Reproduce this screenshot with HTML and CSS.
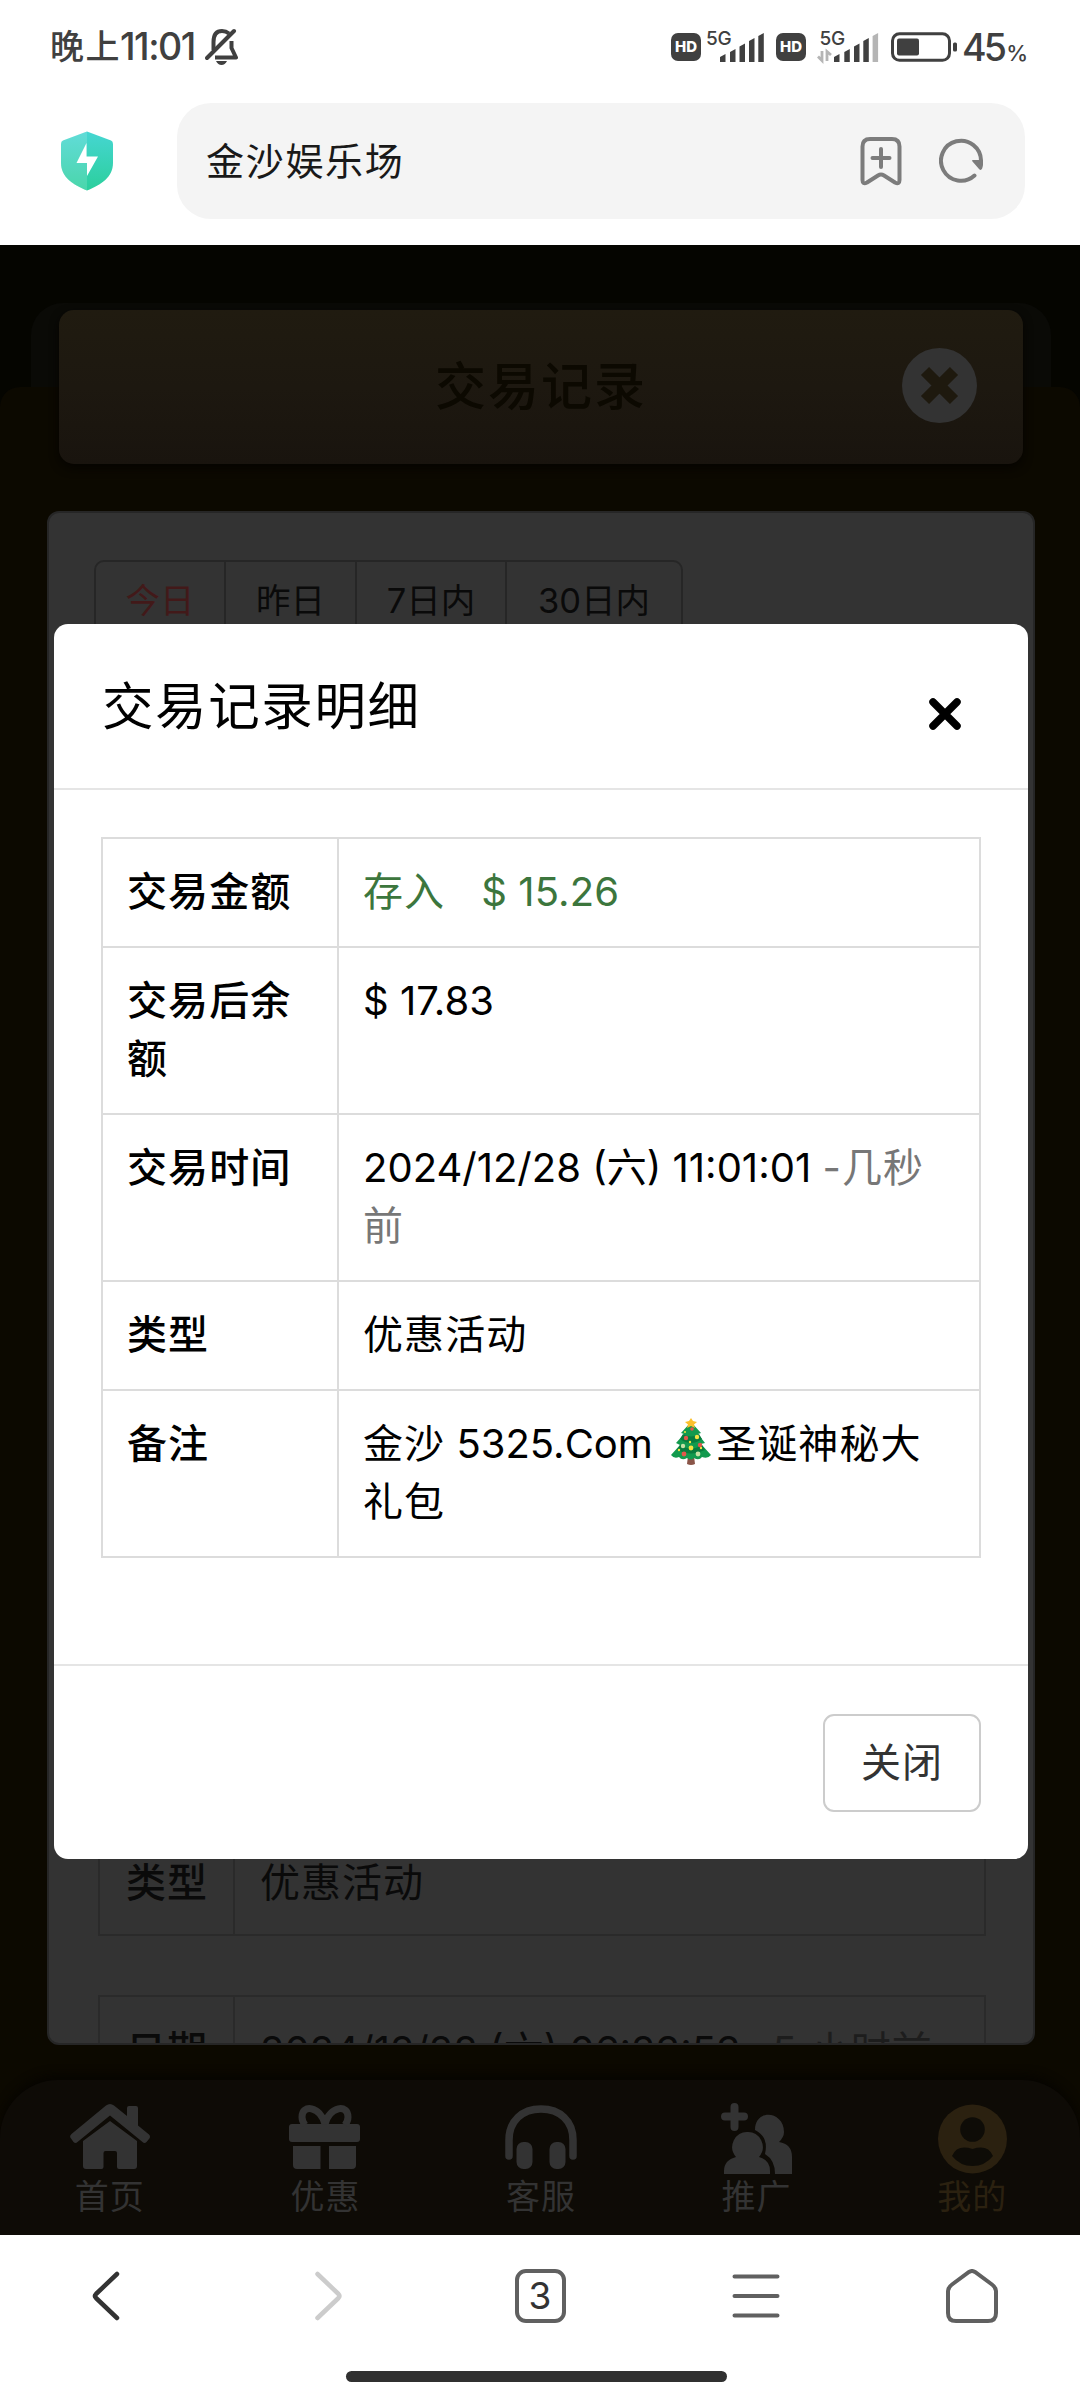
FILE: index.html
```html
<!DOCTYPE html>
<html lang="zh-CN">
<head>
<meta charset="utf-8">
<title>金沙娱乐场</title>
<link rel="stylesheet" href="styles.css">
</head>
<body>
<div class="screen">
  <header class="status">
    <div class="status-left">
      <span class="clock-cjk">晚上</span><span class="clock-num">11:01</span>
      <svg class="bell" width="33" height="38" viewBox="0 0 33 38" fill="none" stroke="#404040" stroke-width="4">
        <path d="M8.500 22V14Q8.500 3 17 3Q21 3 24 5.500M26.500 13V20L31 29.500H10" stroke-linejoin="round"/>
        <path d="M2 30L29 3" stroke-linecap="round"/>
        <path d="M11 33H22Q20 37 16.500 37Q13 37 11 33Z" fill="#404040" stroke="none"/>
      </svg>
    </div>
    <div class="status-right">
      <span class="hd">HD</span>
      <svg class="signal" width="60" height="34" viewBox="0 0 60 34">
        <text x="0" y="15" class="g5">5G</text>
        <g fill="#404040"><path d="M14 32V27L19.500 24V32ZM24 32V22L29.500 19V32ZM33.500 32V16.500L39 13.500V32ZM43 32V11L48.500 8V32ZM52.300 32V6L57.800 3V32Z"/></g>
      </svg>
      <span class="hd hd-two">HD</span>
      <svg class="signal signal-two" width="62" height="34" viewBox="0 0 62 34">
        <text x="2.500" y="15" class="g5">5G</text>
        <path d="M5 21V30.500L1 26.500M10 31V21.500L14 25" fill="none" stroke="#b5b5b5" stroke-width="2.800"/>
        <g fill="#404040"><path d="M17 32V27L22.500 24V32ZM27.300 32V22L32.800 19V32ZM37 32V16.500L42.500 13.500V32ZM46.300 32V11L51.800 8V32Z"/></g>
        <path d="M55.600 32V6L61.100 3V32Z" fill="#b5b5b5"/>
      </svg>
      <svg class="battery" width="67" height="30" viewBox="0 0 67 30">
        <rect x="1.500" y="1.800" width="57" height="26.500" rx="7" fill="none" stroke="#404040" stroke-width="3"/>
        <rect x="6" y="6.500" width="22" height="17" rx="2" fill="#404040"/>
        <rect x="62" y="10.500" width="4" height="9" rx="1.500" fill="#404040"/>
      </svg>
      <span class="percent">45<small>%</small></span>
    </div>
  </header>

  <div class="address">
    <svg class="shield" width="52" height="60" viewBox="0 0 52 60">
      <defs><linearGradient id="sh" x1="0" y1="0" x2="0" y2="1"><stop offset="0" stop-color="#46d6d2"/><stop offset="1" stop-color="#2bcf9c"/></linearGradient></defs>
      <path d="M26 0.500L50 9.500Q52 10.300 52 13V32C52 46 40 54 26 59.500C12 54 0 46 0 32V13Q0 10.300 2 9.500Z" fill="url(#sh)"/>
      <path d="M26 0.500L2 9.500Q0 10.300 0 13V32C0 46 12 54 26 59.500Z" fill="#fff" opacity=".15"/>
      <path d="M25.500 12V25.500H37L26 45V32H15.500Z" fill="#fff"/>
    </svg>
    <div class="field">
      <span class="field-text">金沙娱乐场</span>
      <svg width="42" height="50" viewBox="0 0 42 50" fill="none" stroke="#7c7c7c" stroke-width="4" stroke-linecap="round" stroke-linejoin="round">
        <path d="M10 3H32Q39.500 3 39.500 10.500V44Q39.500 49 35 46.500L24 39.500Q21 37.700 18 39.500L7 46.500Q2.500 49 2.500 44V10.500Q2.500 3 10 3Z"/>
        <path d="M21 13V31M12.500 22H29.500"/>
      </svg>
      <svg class="reload" width="44" height="46" viewBox="0 0 44 46">
        <path d="M35.500 37.500A20 20 0 1 1 42 23" fill="none" stroke="#7c7c7c" stroke-width="4" stroke-linecap="round"/>
        <path d="M33.500 23.500Q32 22 34 22H44V27Q43 34 40 31Z" fill="#7c7c7c"/>
      </svg>
    </div>
  </div>

  <main class="site">
    <div class="backplate"></div>
    <div class="sheet"></div>
    <div class="site-flow">
      <div class="titlebar">
        <h1>交易记录</h1>
        <svg class="round-close" width="75" height="75" viewBox="0 0 75 75"><circle cx="37.500" cy="37.500" r="37.500" fill="#333"/><path d="M23 23L52 52M52 23L23 52" stroke="#1e190e" stroke-width="11.500"/></svg>
      </div>
      <section class="panel">
        <div class="tabs"><span class="tab active">今日</span><span class="tab">昨日</span><span class="tab">7日内</span><span class="tab">30日内</span></div>
        <div class="records">
          <div class="record"><b>类型</b><span>优惠活动</span></div>
          <div class="record next"><b>日期</b><span><i class="rec-date">2024/12/28 (六) 06:23:53</i><em>-5 小时前</em></span></div>
        </div>
      </section>
      <nav class="nav">
        <a class="nav-item">
          <svg width="80" height="72" viewBox="0 0 80 72" fill="#333">
            <path d="M1 35.500Q-1 33 1.500 31L36 2.500Q40 -0.500 44 2.500L57 13V5Q57 3 59 3H66Q68 3 68 5V22.500L79 31.500Q81 33.500 79 36L76.500 39Q74.500 41 72.500 39L40 12.500L7.500 39Q5.500 41 3.500 39Z"/>
            <path d="M13 38L40 18L67 38V63Q67 66 64 66H49Q47 66 47 64V50Q47 48 45 48H35.500Q33.500 48 33.500 50V64Q33.500 66 31.500 66H16Q13 66 13 63Z"/>
          </svg><span>首页</span></a>
        <a class="nav-item">
          <svg width="72" height="72" viewBox="0 0 72 72" fill="#333">
            <rect x="0" y="21" width="71" height="18" rx="3"/><path d="M4 43H31.500V66H8Q4 66 4 62ZM40 43H67V62Q67 66 63 66H40Z"/>
            <path d="M36 21C31 3 13 1 13 14Q13 18 16 22M36 21C41 3 59 1 59 14Q59 18 56 22" fill="none" stroke="#333" stroke-width="7"/>
          </svg><span>优惠</span></a>
        <a class="nav-item">
          <svg width="72" height="72" viewBox="0 0 72 72" fill="#333">
            <path d="M4 53V37C4 18 17 6 36 6S68 18 68 37V53" fill="none" stroke="#333" stroke-width="7.500" stroke-linecap="round"/>
            <rect x="11.500" y="39" width="16" height="27" rx="7"/><rect x="44.500" y="39" width="16" height="27" rx="7"/>
          </svg><span>客服</span></a>
        <a class="nav-item">
          <svg width="72" height="72" viewBox="0 0 72 72" fill="#333">
            <path d="M13.500 4V24M4 13.500H23" stroke="#333" stroke-width="8" stroke-linecap="round"/>
            <path d="M34 27C34 5 63 8 63 29Q63 34 58 39Q71 41 71 54V71H54Q54 57 44 51Q48 34 34 27Z"/>
            <path d="M26.500 29A14.500 15 0 0 1 38 54Q49 57 49 68V71H3V68Q3 57 15 54A14.500 15 0 0 1 26.500 29Z"/>
          </svg><span>推广</span></a>
        <a class="nav-item current">
          <svg width="69" height="72" viewBox="0 0 69 72">
            <circle cx="34.500" cy="36" r="34.500" fill="#2b2110"/><circle cx="34.500" cy="26.500" r="12.300" fill="#0e0c07"/>
            <path d="M14 53Q19 41 34.500 46Q50 41 55 53Q47 63 34.500 63Q22 63 14 53Z" fill="#0e0c07"/>
          </svg><span>我的</span></a>
      </nav>
    </div>

    <div class="modal">
      <div class="modal-head"><h2>交易记录明细</h2>
        <svg width="34" height="34" viewBox="0 0 34 34"><path d="M5 5L29 29M29 5L5 29" stroke="#000" stroke-width="7.500" stroke-linecap="round"/></svg>
      </div>
      <div class="modal-body">
        <table class="detail">
          <tr><th>交易金额</th><td class="green">存入<span class="amount">$ 15.26</span></td></tr>
          <tr><th>交易后余额</th><td><span class="balance">$ 17.83</span></td></tr>
          <tr><th>交易时间</th><td><span class="date">2024/12/28 </span><span class="day">(六)</span><span class="time"> 11:01:01 </span><span class="ago">-几秒<br>前</span></td></tr>
          <tr><th>类型</th><td>优惠活动</td></tr>
          <tr><th>备注</th><td>金沙<span class="site-name"> 5325.Com </span><svg class="tree" role="img" aria-label="🎄" width="40" height="48" viewBox="0 0 40 48">
            <path d="M17 38H23L24 46Q20 48 16 46Z" fill="#8a5548"/>
            <path d="M20 4L30 15L27 16L34 25L30 26L40 37Q37 41 31 39Q28 43 23 40Q20 43 16 40Q11 43 8 39Q3 41 0 37L9 27L5 25L13 16L10 15Z" fill="#129a4e"/>
            <path d="M12 16Q20 21 28 16L31 21Q20 29 9 21ZM9 27Q20 34 31 27L34 32Q20 39 6 32Z" fill="#087c3e"/>
            <path d="M20 0L22 3L26 4L23 6.500L24 10L20 8L16 10L17 6.500L14 4L18 3Z" fill="#fbc02d"/>
            <g fill="#f5e342"><circle cx="26" cy="19" r="2.200"/><circle cx="20" cy="30" r="2.400"/><circle cx="14" cy="14" r="1"/><circle cx="30" cy="30" r="1.200"/><circle cx="8" cy="32" r="1.200"/><circle cx="19" cy="24" r="1.200"/></g>
            <g fill="#e2574c"><circle cx="15" cy="20" r="2.200"/><circle cx="21" cy="11" r="1.800"/><circle cx="29" cy="27" r="2.200"/><circle cx="13" cy="36" r="2.400"/></g>
            <g fill="#c5e1a5"><circle cx="12" cy="28" r="2.200"/><circle cx="27" cy="36" r="2.400"/></g>
          </svg>圣诞神秘大<br>礼包</td></tr>
        </table>
      </div>
      <div class="modal-foot"><button class="close-btn">关闭</button></div>
    </div>
  </main>

  <footer class="browser-bar">
    <div class="keys">
      <svg width="52" height="54" viewBox="0 0 52 54" fill="none" stroke="#333" stroke-width="4.500" stroke-linecap="round" stroke-linejoin="round"><path d="M35 5L14 25Q12 27 14 29L35 49"/></svg>
      <svg width="52" height="54" viewBox="0 0 52 54" fill="none" stroke="#ccc" stroke-width="4.500" stroke-linecap="round" stroke-linejoin="round"><path d="M19.500 5L40.500 25Q42.500 27 40.500 29L19.500 49"/></svg>
      <span class="count">3</span>
      <svg width="52" height="54" viewBox="0 0 52 54" stroke="#606060" stroke-width="4" stroke-linecap="round"><path d="M4.500 7.500H47.500M4.500 27H47.500M4.500 46.500H47.500"/></svg>
      <svg width="52" height="54" viewBox="0 0 52 54" fill="none" stroke="#606060" stroke-width="4"><path d="M23 3Q26 1 29 3L46 15.500Q50 18.500 50 22V44Q50 52 42 52H10Q2 52 2 44V22Q2 18.500 6 15.500Z"/></svg>
    </div>
    <div class="handle"></div>
  </footer>
</div>
</body>
</html>
```

FILE: styles.css
```css
* { box-sizing: border-box; }
body { margin: 0; background: #fff; font-family: Inter, "Noto Sans CJK SC", sans-serif; }
svg { display: block; flex: none; }
h1, h2 { margin: 0; font-weight: 400; }
.screen { width: 1080px; height: 2400px; display: flex; flex-direction: column; overflow: hidden; background: #fff; }

.status { height: 94px; padding: 0 55px 0 50px; display: flex; justify-content: space-between; align-items: center; color: #404040; }
.status-left, .status-right { display: flex; align-items: center; height: 38px; }
.clock-cjk { width: 70px; font-size: 34px; font-weight: 500; letter-spacing: 1.500px; line-height: 38px; white-space: nowrap; }
.clock-num { width: 82px; font-size: 37.500px; font-weight: 500; letter-spacing: -1.500px; line-height: 38px; white-space: nowrap; }
.bell { margin-left: 3px; }
.hd { width: 30px; height: 28px; margin-right: 5px; border-radius: 7px; background: #404040; color: #fff; font-size: 15px; font-weight: 800; line-height: 28px; text-align: center; }
.hd-two { margin: 0 11px 0 10px; }
.signal { overflow: visible; }
.g5 { font: 500 19px Inter, sans-serif; fill: #404040; letter-spacing: -.3px; }
.battery { margin-left: 12px; }
.percent { width: 63px; margin-left: 4px; font-size: 37.500px; font-weight: 500; letter-spacing: -2.800px; white-space: nowrap; }
.percent small { margin-left: 2px; font-size: 22px; }

.address { height: 151px; padding: 9px 55px 26px 61px; display: flex; justify-content: space-between; align-items: center; }
.field { width: 848px; height: 116px; padding: 0 42px 0 29px; display: flex; align-items: center; border-radius: 34px; background: #f4f4f4; }
.field-text { flex: 1; padding-bottom: 5px; color: #191919; font-size: 38px; letter-spacing: 1.700px; }
.reload { margin-left: 37px; }

.site { position: relative; height: 1990px; flex: none; overflow: hidden; background: #050500; }
.backplate { position: absolute; left: 31px; right: 29px; top: 58px; height: 200px; border-radius: 32px 32px 0 0; background: #0a0a06; }
.sheet { position: absolute; left: 0; right: 0; top: 142px; bottom: 0; border-radius: 20px 20px 0 0; background: #0c0900; }
.site-flow { position: relative; height: 100%; padding-top: 65px; display: flex; flex-direction: column; }
.titlebar { display: grid; grid-template-columns: 130px 1fr 130px; align-items: center; height: 154px; flex: none; margin: 0 57px 0 59px; border-radius: 15px; background: linear-gradient(#201b10, #1d1810 50%, #19140e); box-shadow: 0 4px 10px #060400; }
.titlebar h1 { grid-column: 2; color: #0c0901; font-size: 51px; font-weight: 500; letter-spacing: 2px; text-align: center; line-height: 70px; }
.round-close { justify-self: end; margin: 0 46px 4px 0; }
.panel { height: 1534px; flex: none; margin: 47px 45px 0 47px; padding: 47px 45px 0 45px; display: flex; flex-direction: column; justify-content: space-between; overflow: hidden; border: 2px solid #262626; border-radius: 12px; background: #333; }
.tabs { display: flex; align-self: flex-start; width: 589px; height: 80px; border: 2px solid #262626; border-radius: 10px 10px 0 0; color: #0a0a0a; font-size: 34.500px; line-height: 78px; text-align: center; }
.tab { width: 131px; border-right: 2px solid #262626; white-space: nowrap; }
.tab.active { color: #421919; width: 130px; }
.tab:nth-child(3) { width: 150px; }
.tab:nth-child(4) { flex: 1; border: 0; }
.records { margin: 0 2px 0 4px; color: #0a0a0a; font-size: 40px; letter-spacing: 1px; }
.record { display: grid; grid-template-columns: 135px 1fr; height: 109px; border: 2px solid #2a2a2a; line-height: 107px; white-space: nowrap; }
.record b { padding-left: 26px; border-right: 2px solid #2a2a2a; font-weight: 500; }
.record span { padding-left: 25px; }
.record i { font-style: normal; letter-spacing: 0; }
.record em { font-style: normal; color: #1d1d1d; margin-left: 12px; }
.record.next { height: 48px; margin-top: 59px; border-bottom: 0; overflow: hidden; }
.nav { display: grid; grid-template-columns: repeat(5, 1fr); height: 155px; flex: none; margin-top: 35px; padding: 23px 0 0 2px; border-radius: 58px 58px 0 0; background: #0e0b06; box-shadow: 0 -5px 10px #070500; color: #333; }
.nav-item { display: flex; flex-direction: column; align-items: center; font-size: 34px; letter-spacing: 1px; line-height: 43px; }
.nav-item.current { color: #2b2110; }

.modal { position: absolute; left: 54px; top: 379px; width: 974px; height: 1235px; display: flex; flex-direction: column; border-radius: 14px; background: #fff; color: #000; }
.modal-head { height: 166px; padding: 0 66px 0 48px; display: flex; align-items: center; justify-content: space-between; border-bottom: 2px solid #e5e5e5; }
.modal-head h2 { font-size: 51.500px; letter-spacing: 1.600px; line-height: 70px; }
.modal-head svg { margin-top: 16px; }
.modal-body { height: 876px; padding: 47px 47px 0; border-bottom: 2px solid #e5e5e5; }
.detail { width: 880px; border-collapse: collapse; table-layout: fixed; font-size: 40px; letter-spacing: 1.100px; line-height: 58px; }
.detail th, .detail td { padding: 24px 24px 25px; border: 2px solid #dcdcdc; vertical-align: top; text-align: left; white-space: nowrap; }
.detail th { width: 236px; padding-right: 20px; font-weight: 500; white-space: normal; }
.green { color: #3c763d; }
.amount { margin-left: 36px; letter-spacing: .100px; }
.balance, .date, .time, .day, .site-name { letter-spacing: 0; }
.ago { color: #777; }
.tree { display: inline-block; vertical-align: -8px; margin: 0 5px 0 7px; }
.modal-foot { flex: 1; padding: 48px 47px 0; display: flex; justify-content: flex-end; align-items: flex-start; }
.close-btn { width: 158px; height: 98px; padding: 0 0 6px; border: 2px solid #ccc; border-radius: 11px; background: #fff; color: #333; font: 40px "Noto Sans CJK SC", sans-serif; letter-spacing: 1px; }

.browser-bar { height: 165px; display: flex; flex-direction: column; align-items: center; background: #fff; }
.keys { width: 1080px; height: 122px; display: grid; grid-template-columns: repeat(5, 1fr); place-items: center; }
.count { width: 51px; height: 54px; border: 4px solid #606060; border-radius: 11px; color: #333; font-size: 37px; line-height: 46px; text-align: center; }
.handle { width: 381px; height: 11px; margin: 14px 7px 0 0; border-radius: 6px; background: #303030; }
```
